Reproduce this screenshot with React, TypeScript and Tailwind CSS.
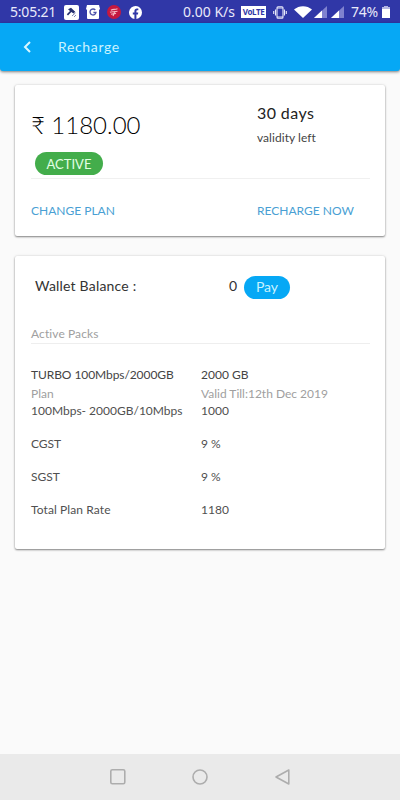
import { ReactNode } from "react";

const packs = [
  { name: "TURBO 100Mbps/2000GB", value: "2000 GB", nameClass: "tracking-[-0.08px]", row: "h-[19px] text-[#444]" },
  { name: "Plan", value: "Valid Till:12th Dec 2019", nameClass: "", row: "h-[17px] text-[#a0a0a0]" },
  { name: "100Mbps- 2000GB/10Mbps", value: "1000", nameClass: "", row: "h-[33px] text-[#505050]" },
  { name: "CGST", value: "9 %", nameClass: "", row: "h-[33px] text-[#505050]" },
  { name: "SGST", value: "9 %", nameClass: "", row: "h-[33px] text-[#505050]" },
  { name: "Total Plan Rate", value: "1180", nameClass: "tracking-[0.1px]", row: "h-[33px] text-[#505050]" },
];

function Card({ className, children }: { className: string; children: ReactNode }) {
  return (
    <section className={`mx-[15px] rounded-[2px] bg-white pl-4 pr-[15px] shadow-[0_1px_2px_rgba(0,0,0,0.45),0_0_3px_rgba(0,0,0,0.12)] ${className}`}>
      {children}
    </section>
  );
}

function Signal() {
  return (
    <svg width="13" height="12" viewBox="0 0 13 12">
      <path d="M0 12 13 0v12z" fill="#7f82cf" />
      <path d="M0 12 8 4.6V12z" fill="#fff" />
    </svg>
  );
}

function StatusBar() {
  return (
    <header className="flex h-[23px] items-center bg-[#3037a7] pt-px font-['Noto_Sans'] text-[14px] text-[#e8e9fa]">
      <span className="ml-[10px] w-[54px] tracking-[-0.2px]">5:05:21</span>
      <svg width="15" height="15" viewBox="0 0 15 15">
        <rect width="15" height="15" rx="2" fill="#fff" />
        <path d="M4 4.2 7 2.8l4.2 4-1.6 1.7L7.3 7 4 10.5 2.8 9.2 6 6z" fill="#26306f" />
        <path d="m8 11 3.5-3.2M10 12l2-2" stroke="#8187b7" strokeWidth="1" />
      </svg>
      <svg className="ml-[7px]" width="14" height="14" viewBox="0 0 14 14">
        <path d="M1 0h12l1 4-1 1v8a1 1 0 0 1-1 1H2a1 1 0 0 1-1-1V5L0 4z" fill="#fff" />
        <path d="M9.300 5A3 3 0 1 0 10 7.500H7.400" fill="none" stroke="#4b50a9" strokeWidth="1.3" />
      </svg>
      <svg className="ml-[7px]" width="14" height="14" viewBox="0 0 14 14">
        <circle cx="7" cy="7" r="7" fill="#c5183f" />
        <path d="M4 5.2c2-1.5 3.5-.2 6.5-1.4M3 7.3c2.5-1.3 4 .1 7.5-1M4 9.3c1.8-1 3 0 5-1M6 11l2-5" fill="none" stroke="#f3b6c0" strokeWidth="1.1" />
      </svg>
      <svg className="ml-2" width="13" height="13" viewBox="0 0 24 24">
        <path d="M24 12a12 12 0 1 0-14 11.900v-8.400H7V12h3V9.400C10 6.400 11.800 4.700 14.500 4.700c1.300 0 2.700.2 2.700.2v3h-1.500c-1.500 0-2 .9-2 1.900V12h3.400l-.6 3.500h-2.800v8.400A12 12 0 0 0 24 12z" fill="#fff" />
      </svg>
      <span className="ml-[41px] w-[58px] whitespace-nowrap">0.00 K/s</span>
      <span className="flex h-[12px] w-[25px] items-center justify-center bg-white text-[8px] font-bold tracking-[-0.4px] text-[#3037a7]">VoLTE</span>
      <svg className="ml-[7px]" width="14" height="13" viewBox="0 0 14 13" fill="none" stroke="#e8e9fa" strokeWidth="1.1">
        <rect x="4" y=".7" width="6" height="11.600" rx="1" />
        <path d="M4 2h6M4 11h6M2.500 3.500v6M.7 5v3M11.500 3.500v6M13.300 5v3" />
      </svg>
      <svg className="ml-[7px]" width="18" height="12" viewBox="0 0 18 12">
        <path d="M0 3.500C5-1 13-1 18 3.500L9 12z" fill="#fff" />
      </svg>
      <span className="ml-[2px] flex gap-1"><Signal /><Signal /></span>
      <span className="ml-[7px] w-[31px] tracking-[-0.3px]">74%</span>
      <svg width="8" height="12" viewBox="0 0 8 12">
        <path d="M2 0h4v1h2v3H0V1h2z" fill="#b4b6e3" />
        <path d="M0 3h8v9H0z" fill="#fff" />
      </svg>
    </header>
  );
}

export default function App() {
  return (
    <div className="flex h-[800px] w-[400px] flex-col overflow-hidden bg-[#fafafa] font-['Lato','Noto_Sans',sans-serif] text-[12px] leading-4 text-[#333]">
      <StatusBar />
      <nav className="flex h-[48px] items-center rounded-b-[3px] bg-[#06a8f5] text-[#c9f3ff] shadow-[0_1px_3px_rgba(0,0,0,0.5)]">
        <svg className="ml-[23px]" width="8" height="12" viewBox="0 0 8 12" fill="none" stroke="#d9f7ff" strokeWidth="2">
          <path d="M7 1 2 6l5 5" />
        </svg>
        <h1 className="ml-[27px] text-[14px] tracking-[0.65px]">Recharge</h1>
      </nav>

      <Card className="mt-[14px] h-[151px]">
        <div className="flex h-[94px] border-b border-[#f0f0f0]">
          <div className="w-[226px] pt-[25px]">
            <p className="h-[30px] whitespace-nowrap text-[24px] font-light leading-[30px] text-black">₹ 1180.00</p>
            <span className="ml-1 mt-3 flex h-[23px] w-[68px] items-center justify-center rounded-full bg-[#43ad4b] text-[13px] text-[#e2ffe4]">ACTIVE</span>
          </div>
          <div className="pt-[18px]">
            <p className="text-[16px] leading-5 tracking-[0.4px] text-[#222]">30 days</p>
            <p className="mt-[7px] text-[12px] tracking-[0.05px] text-[#444]">validity left</p>
          </div>
        </div>
        <div className="flex pt-6 text-[#4a9fd4]">
          <button className="w-[226px] text-left">CHANGE PLAN</button>
          <button>RECHARGE NOW</button>
        </div>
      </Card>

      <Card className="mt-[20px] h-[293px]">
        <div className="flex h-[62px] items-center">
          <span className="relative -top-px ml-1 w-[194px] text-[14px] tracking-[0.2px]">Wallet Balance :</span>
          <span className="relative -top-px w-[15px] text-[14px]">0</span>
          <button className="h-[23px] w-[46px] rounded-full bg-[#06a8f5] text-[14px] text-[#c9f3ff]">Pay</button>
        </div>
        <h2 className="h-[26px] border-b border-[#eee] pt-[8px] text-[12px] tracking-[0.1px] text-[#a0a0a0]">Active Packs</h2>
        <div className="pt-[23px]">
          {packs.map((p) => (
            <div key={p.name} className={`flex whitespace-nowrap ${p.row}`}>
              <span className={`w-[170px] ${p.nameClass}`}>{p.name}</span>
              <span>{p.value}</span>
            </div>
          ))}
        </div>
      </Card>

      <footer className="mt-auto flex h-[46px] items-center bg-[#eaeaea]">
        <svg className="ml-[110px]" width="180" height="16" viewBox="0 0 180 16" fill="none" stroke="#adadad" strokeWidth="1.600">
          <rect x=".8" y=".8" width="14" height="14" rx="1.500" />
          <circle cx="90" cy="8" r="7" />
          <path d="m166 8 12.800-7v14z" strokeLinejoin="round" />
        </svg>
      </footer>
    </div>
  );
}
